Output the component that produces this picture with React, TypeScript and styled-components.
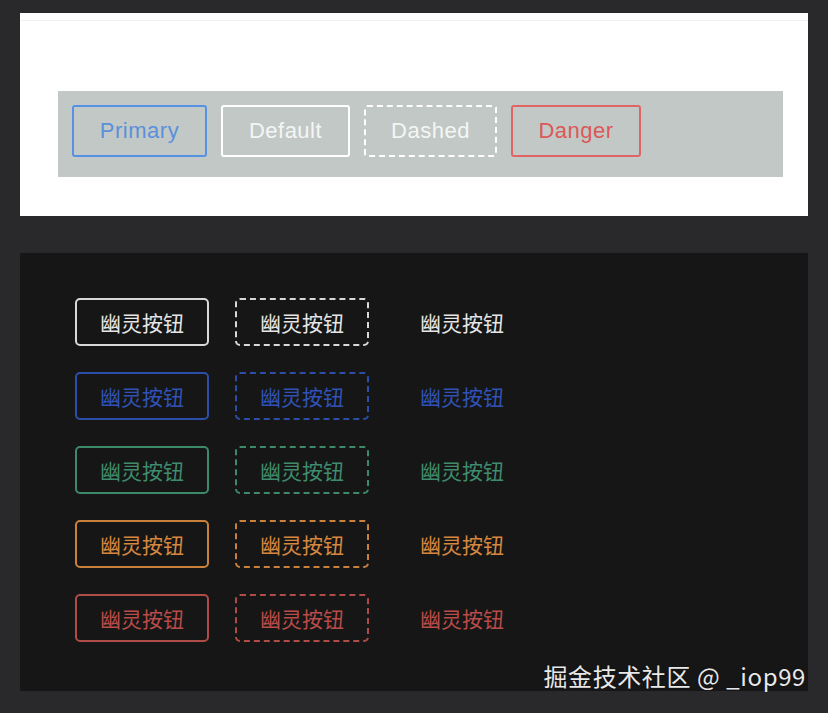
import React from "react";
import styled, { createGlobalStyle, css } from "styled-components";

const Global = createGlobalStyle`
  html, body { margin: 0; padding: 0; background: #29292b; }
  body { font-family: "Liberation Sans", "Noto Sans CJK SC", sans-serif; }
`;

const Page = styled.div`
  position: relative;
  width: 828px;
  height: 713px;
  box-sizing: border-box;
  padding: 13px 20px 0 20px;
  display: flex;
  flex-direction: column;
  gap: 37px;
`;

const LightPanel = styled.section`
  height: 203px;
  background: #ffffff;
  box-sizing: border-box;
  padding: 7px 0 0 0;
  display: flex;
  flex-direction: column;
`;

const Rule = styled.div`
  height: 1px;
  background: #f1f2f2;
`;

const Bar = styled.div`
  margin: 70px 0 0 38px;
  width: 725px;
  height: 86px;
  box-sizing: border-box;
  background: #c2c8c6;
  padding: 14px 14px;
  display: flex;
  gap: 14px;
  align-items: flex-start;
`;

type Kind = "primary" | "default" | "dashed" | "danger";

const kindStyle: Record<Kind, ReturnType<typeof css>> = {
  primary: css`border: 2px solid #5592e4; color: #5a90dc;`,
  default: css`border: 2px solid #ffffff; color: #f4f6f5;`,
  dashed: css`border: 2px dashed #ffffff; color: #f4f6f5;`,
  danger: css`border: 2px solid #e06464; color: #dc5858;`,
};

const GhostButton = styled.button<{ $kind: Kind; $w: number }>`
  width: ${(p) => p.$w}px;
  height: 52px;
  box-sizing: border-box;
  background: transparent;
  border-radius: 3px;
  font-family: "Liberation Sans", sans-serif;
  font-size: 22px;
  letter-spacing: 0.5px;
  display: flex;
  align-items: center;
  justify-content: center;
  padding: 0;
  ${(p) => kindStyle[p.$kind]}
`;

const DarkPanel = styled.section`
  height: 438px;
  background: #161616;
  box-sizing: border-box;
  padding: 45px 0 0 55px;
  display: grid;
  grid-template-columns: repeat(3, 134px);
  grid-auto-rows: 48px;
  column-gap: 26px;
  row-gap: 26px;
  align-content: start;
`;

type Variant = "solid" | "dashed" | "text";

const CnButton = styled.button<{ $color: string; $text: string; $variant: Variant }>`
  box-sizing: border-box;
  width: 134px;
  height: 48px;
  background: transparent;
  border-radius: 5px;
  border: 2px ${(p) => (p.$variant === "dashed" ? "dashed" : "solid")}
    ${(p) => (p.$variant === "text" ? "transparent" : p.$color)};
  color: ${(p) => p.$text};
  font-family: "Noto Sans CJK SC", sans-serif;
  font-size: 21px;
  font-weight: 400;
  display: flex;
  align-items: center;
  justify-content: center;
  padding: 0;
`;

const Watermark = styled.div`
  position: absolute;
  right: 22px;
  top: 658px;
  font-family: "Noto Sans CJK SC", sans-serif;
  font-size: 24px;
  color: #e8e8e8;
  letter-spacing: 0.6px;
  text-shadow: 0 0 2px rgba(0, 0, 0, 0.4);
`;

const rows = [
  { color: "#d8d8d8", text: "#e6e6e6" },
  { color: "#2b4fa9", text: "#3052b6" },
  { color: "#3d8a6b", text: "#3f8b6d" },
  { color: "#c9813b", text: "#d8873f" },
  { color: "#b04c48", text: "#b94b48" },
];

export default function App() {
  return (
    <>
      <Global />
      <Page>
        <LightPanel>
          <Rule />
          <Bar>
            <GhostButton $kind="primary" $w={135}>Primary</GhostButton>
            <GhostButton $kind="default" $w={129}>Default</GhostButton>
            <GhostButton $kind="dashed" $w={133}>Dashed</GhostButton>
            <GhostButton $kind="danger" $w={130}>Danger</GhostButton>
          </Bar>
        </LightPanel>
        <DarkPanel>
          {rows.map((r, i) => (
            <React.Fragment key={i}>
              <CnButton $color={r.color} $text={r.text} $variant="solid">幽灵按钮</CnButton>
              <CnButton $color={r.color} $text={r.text} $variant="dashed">幽灵按钮</CnButton>
              <CnButton $color={r.color} $text={r.text} $variant="text">幽灵按钮</CnButton>
            </React.Fragment>
          ))}
        </DarkPanel>
        <Watermark>掘金技术社区 @ _iop99</Watermark>
      </Page>
    </>
  );
}
